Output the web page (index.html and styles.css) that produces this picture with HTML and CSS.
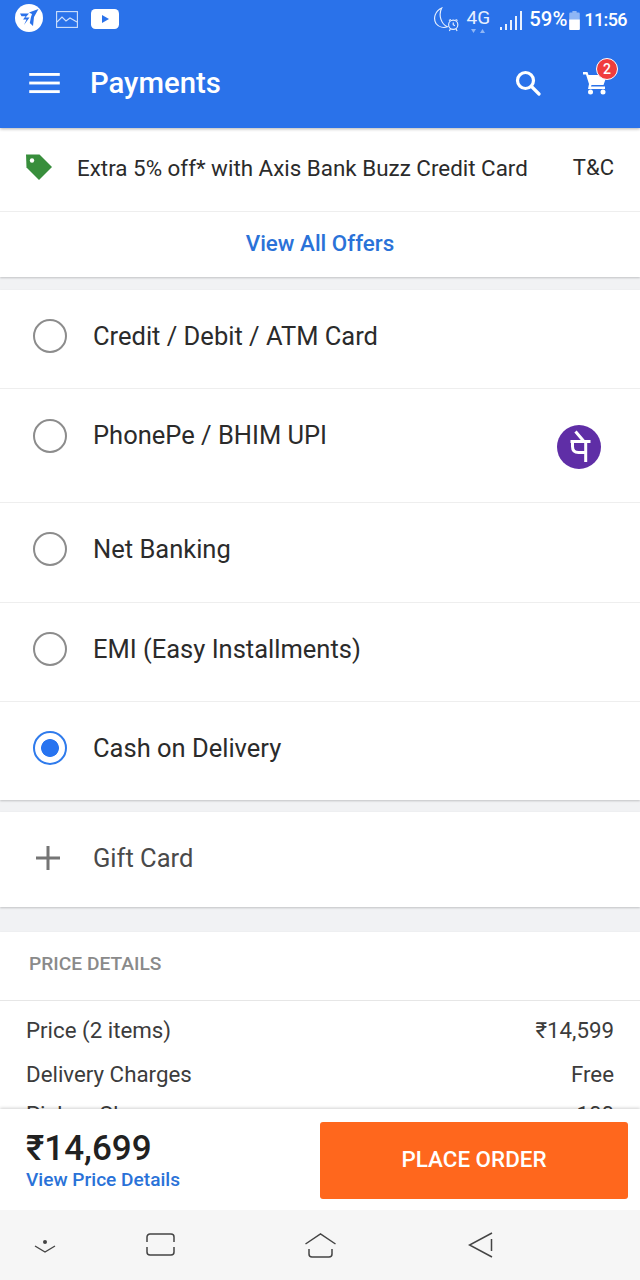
FILE: index.html
```html
<!DOCTYPE html>
<html lang="en">
<head>
<meta charset="utf-8">
<title>Payments</title>
<link rel="stylesheet" href="styles.css">
</head>
<body>
<div class="screen">
  <header class="appbar">
    <div class="status">
      <div class="status-left">
        <svg class="ic-app" viewBox="0 0 28 28"><circle cx="14" cy="14" r="14" fill="#fff"/><path d="M5 9.500h9l-3.500 4h4L9 21l2.500-5.500H8l2.500-3.200H6.500zM14 8.500L23.500 5 19 13l-1 9-3.200-3 1.200-6 1-3z" fill="#2a72ea"/></svg>
        <svg class="ic-pic" viewBox="0 0 22 17" fill="none" stroke="#cfe0fb" stroke-width="1.100"><rect x=".6" y=".6" width="20.800" height="15.800"/><path d="M1 11l5-5 4 4 4-3 7 4"/></svg>
        <svg class="ic-yt" viewBox="0 0 28 20"><rect width="28" height="20" rx="4.500" fill="#fff"/><path d="M11 6l7 4-7 4z" fill="#2a72ea"/></svg>
      </div>
      <div class="status-right">
        <svg class="ic-moon" viewBox="0 0 28 26" fill="none" stroke="#e8f0fe" stroke-width="1.200"><path d="M9 1C2 4 0 12 3 17c3 4 8 5 12 3.500C9 18 5 9 9 1z"/><circle cx="21" cy="18.500" r="4.800"/><path d="M21 16v2.500l1.700 1M16.500 14l2-1M25.500 14l-2-1M18 23l-1 2M24 23l1 2"/></svg>
        <div class="net"><span class="net-label">4G</span><svg class="ic-arrows" viewBox="0 0 16 4"><path d="M1 0h5L3.500 4zM10 4h5l-2.500-4z" fill="#8fb6f5"/></svg></div>
        <svg class="ic-signal" viewBox="0 0 24 20" fill="#e8f0fe"><rect x="0" y="16" width="2" height="3"/><rect x="5" y="13" width="2" height="6"/><rect x="10" y="9" width="2" height="10"/><rect x="15" y="5" width="2" height="14"/><rect x="20" y="0" width="2" height="19"/></svg>
        <span class="pct">59%</span>
        <svg class="ic-batt" viewBox="0 0 10 18"><path d="M3 0h4v1.500h2a1 1 0 0 1 1 1V17a1 1 0 0 1-1 1H1a1 1 0 0 1-1-1V2.500a1 1 0 0 1 1-1h2z" fill="#8fb6f5"/><path d="M0 8h10v9a1 1 0 0 1-1 1H1a1 1 0 0 1-1-1z" fill="#fff"/></svg>
        <span class="clock">11:56</span>
      </div>
    </div>
    <div class="toolbar">
      <svg class="ic-menu" viewBox="0 0 32 22" fill="#fff"><rect width="32" height="3"/><rect y="9" width="32" height="3"/><rect y="18" width="32" height="3"/></svg>
      <h1 class="title">Payments</h1>
      <svg class="ic-search" viewBox="0 0 26 26" fill="none" stroke="#fff" stroke-width="3.200"><circle cx="10.500" cy="10.500" r="8"/><path d="M16.500 16.500l7.500 7.500" stroke-linecap="round"/></svg>
      <div class="cart">
        <svg class="ic-cart" viewBox="0 0 26 24" fill="#fff"><path d="M0 1h4.500l1 3H24l-3.500 10H8.500L8 15.500h14V18H5L6 13 3 3.500H0z"/><circle cx="7.500" cy="21" r="2.500"/><circle cx="20" cy="21" r="2.500"/></svg>
        <span class="badge">2</span>
      </div>
    </div>
  </header>

  <main class="content">
    <section class="card">
      <div class="offer">
        <svg class="ic-tag" viewBox="0 0 26 26"><path d="M0 .5h13.500L26 13 13 26 .5 13.500z" fill="#388e3c"/><circle cx="6" cy="6.500" r="2.200" fill="#fff"/></svg>
        <span class="offer-text">Extra 5% off* with Axis Bank Buzz Credit Card</span>
        <span class="offer-tc">T&amp;C</span>
      </div>
      <div class="all-offers">View All Offers</div>
    </section>

    <section class="card options">
      <div class="option"><span class="radio"></span><span>Credit / Debit / ATM Card</span></div>
      <div class="option option-upi"><span class="radio"></span><span class="upi-label">PhonePe / BHIM UPI</span>
        <svg class="ic-phonepe" viewBox="0 0 44 44"><circle cx="22" cy="22" r="22" fill="#5f2ea6"/><path d="M13.500 16.500h20M28.700 16.500V37M15.500 16.500v5c0 4 2.500 6 6 6h7M18.500 6.500l8.500 10" fill="none" stroke="#fff" stroke-width="3"/></svg>
      </div>
      <div class="option option-net"><span class="radio"></span><span>Net Banking</span></div>
      <div class="option"><span class="radio"></span><span>EMI (Easy Installments)</span></div>
      <div class="option"><span class="radio radio-on"></span><span>Cash on Delivery</span></div>
    </section>

    <section class="card gift">
      <svg class="ic-plus" viewBox="0 0 24 24" fill="#757575"><rect y="10.500" width="24" height="3"/><rect x="10.500" width="3" height="24"/></svg>
      <span>Gift Card</span>
    </section>

    <section class="card price">
      <div class="price-head">PRICE DETAILS</div>
      <div class="price-rows">
        <div class="price-row"><span>Price (2 items)</span><span>₹14,599</span></div>
        <div class="price-row"><span>Delivery Charges</span><span>Free</span></div>
        <div class="price-row"><span>Pickup Charges</span><span>100</span></div>
      </div>
    </section>
  </main>

  <footer class="checkout">
    <div class="total">
      <div class="amount">₹14,699</div>
      <div class="view-price">View Price Details</div>
    </div>
    <div class="place">PLACE ORDER</div>
  </footer>

  <nav class="navbar">
    <svg class="nav-down" viewBox="0 0 22 16" fill="none" stroke="#444" stroke-width="1.400"><circle cx="11" cy="3" r="2" fill="#444" stroke="none"/><path d="M1 7l10 6 10-6"/></svg>
    <svg class="nav-recent" viewBox="0 0 29 23" fill="none" stroke="#444" stroke-width="1.500"><path d="M1 9V4a3 3 0 0 1 3-3h21a3 3 0 0 1 3 3v5M1 14v5a3 3 0 0 0 3 3h21a3 3 0 0 0 3-3v-5"/></svg>
    <svg class="nav-home" viewBox="0 0 31 25" fill="none" stroke="#444" stroke-width="1.500"><path d="M.5 11L15.500 1l15 10M4 16v5a3 3 0 0 0 3 3h17a3 3 0 0 0 3-3v-5"/></svg>
    <svg class="nav-back" viewBox="0 0 25 26" fill="none" stroke="#444" stroke-width="1.500"><path d="M24 1L1.500 13 24 25M23.500 7v12"/></svg>
  </nav>
</div>
</body>
</html>
```

FILE: styles.css
```css
* { box-sizing: border-box; margin: 0; padding: 0; }
html, body { width: 640px; height: 1280px; overflow: hidden; }
body { font-family: Roboto, "Noto Sans", sans-serif; color: #212121; background: #f1f2f4; }
svg { display: block; flex: none; }

.screen { width: 640px; height: 1280px; display: flex; flex-direction: column; overflow: hidden; }

.appbar { height: 128px; flex: none; background: #2a72ea; color: #fff; box-shadow: 0 1px 3px rgba(0,0,0,.3); position: relative; z-index: 2; }
.status { height: 38px; display: flex; justify-content: space-between; padding: 4px 13px 0 15px; }
.status-left { display: flex; align-items: center; height: 28px; }
.ic-app { width: 28px; height: 28px; }
.ic-pic { width: 22px; height: 17px; margin-left: 13px; margin-top: 2px; }
.ic-yt { width: 28px; height: 20px; margin-left: 13px; margin-top: 2px; }
.status-right { display: flex; align-items: center; height: 30px; }
.ic-moon { width: 27px; height: 25px; margin-top: 1px; }
.net { margin-left: 6px; display: flex; flex-direction: column; align-items: center; width: 24px; margin-top: 2px; }
.net-label { font-size: 19px; line-height: 20px; font-weight: 400; color: #e8f0fe; }
.ic-arrows { width: 16px; height: 4px; margin-top: 1px; }
.ic-signal { width: 24px; height: 20px; margin-left: 10px; margin-top: 4px; }
.pct { font-size: 20.300px; font-weight: 500; margin-left: 5px; }
.ic-batt { width: 11px; height: 19px; margin-left: 2px; margin-top: 3px; }
.clock { font-size: 18px; font-weight: 500; letter-spacing: -.6px; margin-left: 4px; }

.toolbar { height: 90px; display: flex; align-items: center; padding: 0 25px 0 29px; }
.ic-menu { width: 31px; height: 21px; }
.title { flex: 1; font-size: 29.300px; font-weight: 500; margin-left: 30px; color: #fff; font-family: Roboto, sans-serif; }
.ic-search { width: 26px; height: 26px; }
.cart { position: relative; margin-left: 42px; width: 26px; height: 24px; margin-right: 6px; }
.ic-cart { width: 26px; height: 24px; }
.badge { position: absolute; left: 13px; top: -13px; width: 22px; height: 22px; border-radius: 50%; background: #f03d3d; border: 1px solid #fff; color: #fff; font-size: 14px; font-weight: 500; line-height: 20px; text-align: center; }

.content { flex: 1; min-height: 0; overflow: hidden; }
.card { background: #fff; box-shadow: 0 1px 2px rgba(0,0,0,.2); }

.offer { height: 84px; display: flex; align-items: center; padding: 0 26px 4px; border-bottom: 1px solid #eeeeee; }
.ic-tag { width: 26px; height: 26px; margin-top: -1px; }
.offer-text { flex: 1; margin-left: 25px; font-size: 22.400px; color: #2b2b2b; }
.offer-tc { font-size: 22px; color: #2b2b2b; }
.all-offers { height: 65px; display: flex; align-items: center; justify-content: center; padding-bottom: 3px; color: #2a72d8; font-size: 22.400px; font-weight: 500; }

.options { margin-top: 13px; }
.option { height: 99px; display: flex; align-items: center; padding: 0 0 6px 33px; gap: 26px; font-size: 25.500px; color: #2b2b2b; border-bottom: 1px solid #eeeeee; position: relative; }
.option:last-child { border-bottom: 0; height: 98px; }
.option-net { height: 100px; padding-bottom: 8px; }
.option-upi { height: 114px; align-items: flex-start; padding-top: 30px; }
.upi-label { margin-top: 1px; }
.radio { width: 34px; height: 34px; border-radius: 50%; border: 2.500px solid #8c8c8c; flex: none; background: #fff; }
.radio-on { border-color: #2f7bec; background: radial-gradient(circle, #2874f0 0 8.500px, #fff 9.300px); }
.ic-phonepe { position: absolute; left: 557px; top: 36px; width: 44px; height: 44px; }

.gift { margin-top: 12px; height: 95px; display: flex; align-items: center; padding: 0 0 4px 36px; font-size: 25.500px; color: #4a4a4a; }
.ic-plus { width: 24px; height: 24px; margin-right: 33px; }

.price { margin-top: 25px; padding-bottom: 40px; }
.price-head { height: 69px; display: flex; align-items: center; padding: 0 0 6px 29px; font-size: 19.200px; font-weight: 500; color: #8a8a8a; border-bottom: 1px solid #e6e6e6; }
.price-rows { padding: 7px 26px 0; }
.price-row { height: 44px; display: flex; align-items: center; justify-content: space-between; font-size: 22.300px; color: #3c3c3c; }
.price-row:last-child { margin-top: -4px; }

.checkout { height: 101px; flex: none; background: #fff; display: flex; justify-content: space-between; padding: 21px 12px 0 26px; position: relative; z-index: 2; box-shadow: 0 -1px 3px rgba(0,0,0,.18); }
.amount { font-size: 35px; font-weight: 500; line-height: 38px; color: #212121; }
.view-price { font-size: 19.100px; font-weight: 500; color: #2a72d8; line-height: 24px; }
.place { width: 308px; height: 77px; margin-top: -8px; padding-bottom: 4px; background: #ff671d; border-radius: 3px; color: #fff; font-size: 22.400px; font-weight: 500; display: flex; align-items: center; justify-content: center; }

.navbar { height: 70px; flex: none; background: #f6f6f6; display: flex; align-items: flex-start; padding-left: 34px; position: relative; z-index: 2; }
.nav-down { width: 22px; height: 16px; margin-top: 29px; }
.nav-recent { width: 29px; height: 23px; margin-left: 90px; margin-top: 23px; }
.nav-home { width: 31px; height: 25px; margin-left: 130px; margin-top: 23px; }
.nav-back { width: 25px; height: 26px; margin-left: 132px; margin-top: 22px; }
```
